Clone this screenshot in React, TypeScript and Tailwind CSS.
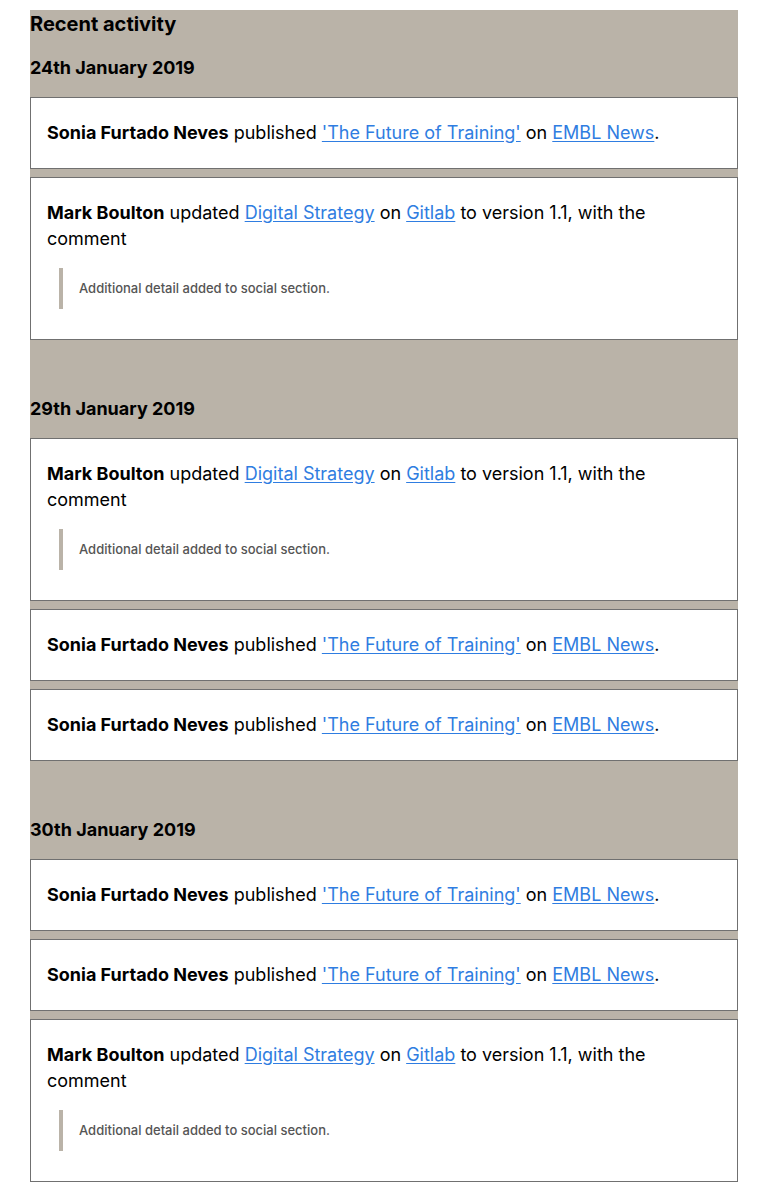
import React from "react";

type Item =
  | { kind: "published" }
  | { kind: "updated" };

const days: { date: string; items: Item[] }[] = [
  { date: "24th January 2019", items: [{ kind: "published" }, { kind: "updated" }] },
  {
    date: "29th January 2019",
    items: [{ kind: "updated" }, { kind: "published" }, { kind: "published" }],
  },
  {
    date: "30th January 2019",
    items: [{ kind: "published" }, { kind: "published" }, { kind: "updated" }],
  },
];

function Link({ children }: { children: React.ReactNode }) {
  return (
    <a href="#" className="text-[#2f7de1] underline underline-offset-2">
      {children}
    </a>
  );
}

function Card({ item }: { item: Item }) {
  if (item.kind === "published") {
    return (
      <div className="bg-white border border-[#707070] px-4 pt-[22px] pb-[22px]">
        <p className="text-[18px] leading-[26px]">
          <strong className="font-bold">Sonia Furtado Neves</strong> published{" "}
          <Link>'The Future of Training'</Link> on <Link>EMBL News</Link>.
        </p>
      </div>
    );
  }
  return (
    <div className="bg-white border border-[#707070] px-4 pt-[22px] pb-[30px]">
      <p className="text-[18px] leading-[26px]">
        <strong className="font-bold">Mark Boulton</strong> updated{" "}
        <Link>Digital Strategy</Link> on <Link>Gitlab</Link> to version 1.1, with the comment
      </p>
      <blockquote className="mt-4 ml-3 border-l-4 border-[#bab3a8] pl-4 py-3 text-[13px] font-medium leading-[17px] text-[#555555]">
        Additional detail added to social section.
      </blockquote>
    </div>
  );
}

export default function App() {
  return (
    <div className="min-h-screen bg-white pt-[10px] pb-[10px] font-['Inter',sans-serif] text-black">
      <div className="mx-[30px] bg-[#bab3a8]">
        <h2 className="pt-[2px] text-[20px] leading-[25px] font-bold">Recent activity</h2>
        {days.map((day, i) => (
          <section key={day.date} className={i === 0 ? "pt-[19px]" : "pt-[57px]"}>
            <h3 className="text-[18px] leading-[24px] font-bold mb-[17px]">{day.date}</h3>
            <div className="flex flex-col gap-2">
              {day.items.map((item, j) => (
                <Card key={j} item={item} />
              ))}
            </div>
          </section>
        ))}
      </div>
    </div>
  );
}
